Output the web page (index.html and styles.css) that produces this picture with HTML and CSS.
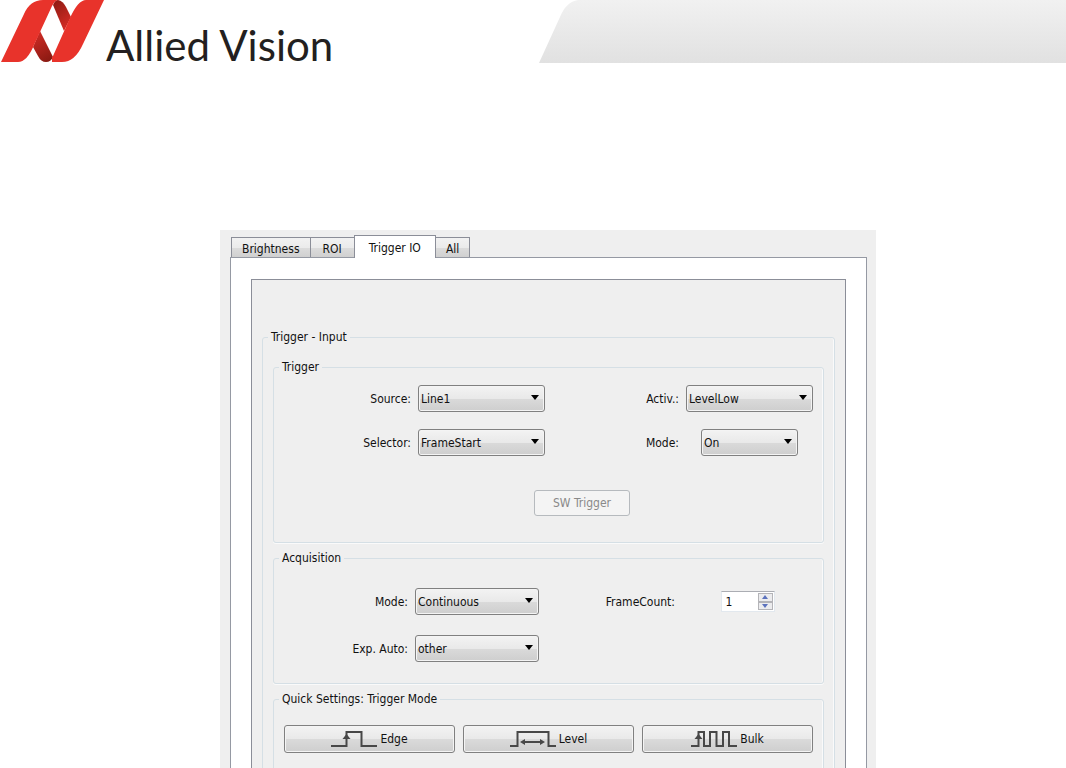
FILE: index.html
```html
<!DOCTYPE html>
<html lang="en">
<head>
<meta charset="utf-8">
<title>Allied Vision - Trigger IO</title>
<link rel="stylesheet" href="styles.css">
</head>
<body>
<header class="header">
  <div class="brand">
    <svg class="brand-mark" width="105" height="63" viewBox="0 0 105 63" aria-hidden="true">
      <defs>
        <linearGradient id="fold-top" x1="0" y1="0" x2="0.5" y2="1"><stop offset="0" stop-color="#8a1a12"/><stop offset="1" stop-color="#d22b24"/></linearGradient>
        <linearGradient id="fold-bottom" x1="0.3" y1="0" x2="0.7" y2="1"><stop offset="0" stop-color="#cf2b25"/><stop offset="1" stop-color="#8a1a12"/></linearGradient>
      </defs>
      <path fill="url(#fold-top)" d="M53 5Q55 0 58 0Q63 1 66 7L71 17L64 31Z"/>
      <path fill="url(#fold-bottom)" d="M33 47L40 31L53 57Q51 62 46 62Q41 62 38 56Z"/>
      <path fill="#e8332b" d="M1 62L24 14Q30 0 43 0H58Q55 0 52 6L34 45Q27 62 18 62Z"/>
      <path fill="#e8332b" d="M52 62V57L53 56L70 18Q78 0 86 0H104L83 44Q75 62 62 62Z"/>
    </svg>
    <span class="brand-name">Allied Vision</span>
  </div>
  <div class="banner">
    <svg class="banner-edge" width="42" height="63" viewBox="0 0 42 63" aria-hidden="true">
      <defs><linearGradient id="edge" x1="0" y1="0" x2="0" y2="63" gradientUnits="userSpaceOnUse"><stop offset="0" stop-color="#f1f1f1"/><stop offset="1" stop-color="#e1e1e1"/></linearGradient></defs>
      <path fill="url(#edge)" d="M0 63L21 17Q27 2 39 0H42V63Z"/>
    </svg>
    <div class="banner-fill"></div>
  </div>
</header>

<main class="window">
  <div class="tabs" role="tablist">
    <button class="tab" role="tab">Brightness</button>
    <button class="tab" role="tab">ROI</button>
    <button class="tab tab-active" role="tab" aria-selected="true">Trigger IO</button>
    <button class="tab" role="tab">All</button>
  </div>
  <div class="pane">
    <form class="sheet">
      <fieldset class="group group-outer">
        <legend>Trigger - Input</legend>

        <fieldset class="group">
          <legend>Trigger</legend>
          <div class="fields fields-trigger">
            <label for="source">Source:</label>
            <span class="combo"><select id="source"><option>Line1</option></select></span>
            <label for="activ">Activ.:</label>
            <span class="combo"><select id="activ"><option>LevelLow</option></select></span>
            <label for="selector">Selector:</label>
            <span class="combo"><select id="selector"><option>FrameStart</option></select></span>
            <label for="mode">Mode:</label>
            <span class="combo combo-short"><select id="mode"><option>On</option></select></span>
          </div>
          <div class="software">
            <button class="push push-software" type="button" disabled>SW Trigger</button>
          </div>
        </fieldset>

        <fieldset class="group">
          <legend>Acquisition</legend>
          <div class="fields fields-acquisition">
            <label for="acq-mode">Mode:</label>
            <span class="combo"><select id="acq-mode"><option>Continuous</option></select></span>
            <label for="frames">FrameCount:</label>
            <span class="spin">
              <input id="frames" type="text" inputmode="numeric" value="1">
              <span class="spin-buttons">
                <button type="button" aria-label="Increase"><svg width="6" height="4" viewBox="0 0 6 4"><path d="M0 4L3 0L6 4Z"/></svg></button>
                <button type="button" aria-label="Decrease"><svg width="6" height="4" viewBox="0 0 6 4"><path d="M0 0L3 4L6 0Z"/></svg></button>
              </span>
            </span>
            <label for="exp-auto">Exp. Auto:</label>
            <span class="combo"><select id="exp-auto"><option>other</option></select></span>
          </div>
        </fieldset>

        <fieldset class="group">
          <legend>Quick Settings: Trigger Mode</legend>
          <div class="quick">
            <button class="push" type="button">
              <svg class="wave" width="46" height="18" viewBox="0 0 46 18"><path d="M0 16H15.500V2H30.500V16H46"/><path class="tip" d="M11.500 9L15.500 4L19.500 9Z"/></svg>
              Edge
            </button>
            <button class="push" type="button">
              <svg class="wave" width="46" height="18" viewBox="0 0 46 18"><path d="M0 16H7.500V2H38.500V16H46"/><path d="M13 12H32"/><path class="tip" d="M10 12L15 9V15ZM35 12L30 9V15Z"/></svg>
              Level
            </button>
            <button class="push" type="button">
              <svg class="wave" width="46" height="18" viewBox="0 0 46 18"><path d="M0 16H7.500V2H13V16H19V2H25.500V16H32V2H38V16H46"/><path class="tip" d="M3.500 9L7.500 4L11.500 9Z"/></svg>
              Bulk
            </button>
          </div>
        </fieldset>
      </fieldset>
    </form>
  </div>
</main>
</body>
</html>
```
FILE: styles.css
```css
* { box-sizing: border-box; }

body {
  display: flex;
  flex-direction: column;
  margin: 0;
  height: 100vh;
  overflow: hidden;
  background: #fff;
  color: #111;
  font: 12px/16px "DejaVu Sans Condensed", "Noto Sans", sans-serif;
}

button, select, input { font: inherit; color: inherit; margin: 0; }

.header { display: flex; flex: none; }
.brand { display: flex; }
.brand-name {
  padding: 18px 0 0 1px;
  color: #231f20;
  font: 42px/54px Lato, sans-serif;
  height: 63px;
}
.banner { display: flex; width: 50%; margin-left: auto; padding-left: 6px; }
.banner-edge { flex: none; }
.banner-fill { flex: 1; height: 63px; background: linear-gradient(#f1f1f1, #e1e1e1); }

.window {
  flex: 1;
  min-height: 0;
  overflow: hidden;
  margin: 167px 190px 0 220px;
  padding: 5px 9px 0 10px;
  background: #efefef;
}

.tabs { display: flex; align-items: flex-end; padding-left: 1px; }
.tab {
  height: 20px;
  padding: 2px 10px 0;
  border: 1px solid #8b8e98;
  border-bottom: 0;
  margin-right: -1px;
  background: linear-gradient(#f2f2f2, #ebebeb 50%, #dcdcdc 51%, #d0d0d0);
}
.tab:nth-child(2) { padding: 2px 12px 0; }
.tab-active {
  position: relative;
  z-index: 1;
  height: 23px;
  margin-bottom: -1px;
  padding: 1px 14px 0;
  background: #fff;
}

.pane {
  padding: 21px 20px 0;
  border: 1px solid #9599a3;
  border-bottom: 0;
  background: #fff;
}
.sheet {
  padding: 49px 10px 0;
  border: 1px solid #8b8e98;
  border-bottom: 0;
  background: #efefef;
}

.group {
  min-width: 0;
  margin: 0 0 7px;
  padding: 0 10px 26px;
  border: 1px solid #d5dfe5;
  border-radius: 3px;
  box-shadow: inset -1px 0 #fafafa, 0 1px #fafafa;
}
.group-outer { padding-top: 14px; }
legend { margin-left: -5px; padding: 0 3px; }

.fields { display: grid; align-items: center; }
.fields label { text-align: right; }
.fields-trigger { grid-template-columns: repeat(4, 1fr); gap: 17px 7px; padding-top: 10px; }
.fields-acquisition { grid-template-columns: 124fr 124fr 129fr 131fr; gap: 20px 7px; padding: 22px 0 0; }
.group .group:nth-of-type(2) { padding-bottom: 21px; }

.combo { position: relative; display: block; }
.combo-short { width: 97px; justify-self: center; }
.combo::after {
  content: "";
  position: absolute;
  top: 10px;
  right: 6px;
  border: 4px solid transparent;
  border-top: 5px solid #000;
  border-bottom: 0;
  pointer-events: none;
}
select, .push {
  width: 100%;
  height: 27px;
  border: 1px solid #808080;
  border-radius: 3px;
  background: linear-gradient(#f3f3f3, #e9e9e9 50%, #dadada 51%, #cecece);
  box-shadow: inset 0 0 0 1px #f4f4f4;
}
select { display: block; appearance: none; padding: 0 2px; }

.software { display: flex; justify-content: center; padding: 34px 0 0 67px; }
.push-software {
  width: 96px;
  height: 26px;
  border-color: #b6babe;
  background: #f4f4f4;
  color: #898989;
}

.spin {
  display: flex;
  width: 54px;
  height: 21px;
  justify-self: center;
  padding: 1px;
  border: 1px solid #e2e8ee;
  border-top-color: #abadb3;
  background: #fff;
}
.spin input { flex: 1; min-width: 0; padding: 0 3px; border: 0; background: none; }
.spin-buttons { display: flex; flex-direction: column; width: 15px; }
.spin-buttons button {
  display: flex;
  flex: 1;
  align-items: center;
  justify-content: center;
  padding: 0;
  border: 1px solid #b4b4b8;
  background: #ececee;
}
.spin-buttons path { fill: #5c72bd; }

.quick { display: grid; grid-template-columns: repeat(3, 1fr); gap: 8px; padding-top: 18px; }
.quick .push { display: flex; height: 28px; align-items: center; justify-content: center; gap: 3px; }
.wave path { fill: none; stroke: #484848; stroke-width: 2; }
.wave .tip { fill: #484848; stroke: none; }
```
